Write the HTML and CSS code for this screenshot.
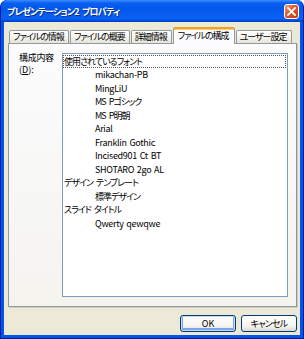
FILE: index.html
```html
<!DOCTYPE html>
<html lang="ja">
<head>
  <meta charset="UTF-8">
  <title>プレゼンテーション2 プロパティ</title>
  <link rel="stylesheet" href="styles.css">
</head>
<body>
  <div class="window">
    <div class="titlebar">
      <span class="title">プレゼンテーション2 プロパティ</span>
      <button class="closeBtn" aria-label="閉じる">
        <svg width="9" height="9" viewBox="0 0 9 9">
          <path d="M1 1 L8 8 M8 1 L1 8" stroke="#fff" stroke-width="1.8" stroke-linecap="square"/>
        </svg>
      </button>
    </div>

    <div class="dialog">
      <div class="tabs">
        <div class="tab">ファイルの情報</div>
        <div class="tab">ファイルの概要</div>
        <div class="tab">詳細情報</div>
        <div class="tab active">ファイルの構成</div>
        <div class="tab">ユーザー設定</div>
      </div>

      <div class="panel">
        <div class="fieldLabel">
          <div>構成内容</div>
          <div class="accel">(<u>D</u>):</div>
        </div>
        <ul class="listBox">
          <li class="focused">使用されているフォント</li>
          <li class="sub lat">mikachan-PB</li>
          <li class="sub lat">MingLiU</li>
          <li class="sub">MS Pゴシック</li>
          <li class="sub">MS P明朝</li>
          <li class="sub lat">Arial</li>
          <li class="sub lat">Franklin Gothic</li>
          <li class="sub lat">Incised901 Ct BT</li>
          <li class="sub lat">SHOTARO 2go AL</li>
          <li>デザイン テンプレート</li>
          <li class="sub">標準デザイン</li>
          <li>スライド タイトル</li>
          <li class="sub lat">Qwerty qewqwe</li>
        </ul>
      </div>

      <div class="buttons">
        <button class="btn default">OK</button>
        <button class="btn">キャンセル</button>
      </div>
    </div>
  </div>
</body>
</html>
```

FILE: styles.css
```css
* {
  margin: 0;
  padding: 0;
  box-sizing: border-box;
}

body {
  background-color: #fff;
  font-family: "Noto Sans CJK JP", "Noto Sans", sans-serif;
  font-feature-settings: "palt";
  font-size: 9px;
  letter-spacing: -1px;
  word-spacing: 2px;
  color: #000;
}

.window {
  width: 304px;
  height: 339px;
  display: flex;
  flex-direction: column;
  background-color: #0055e5;
  border: 1px solid #0019a8;
  border-top: none;
  border-radius: 7px 7px 0 0;
  padding: 0 3px 3px;
  overflow: hidden;
}

.titlebar {
  height: 22px;
  margin: 0 -3px;
  padding: 0 4px 0 6px;
  display: flex;
  align-items: center;
  justify-content: space-between;
  border-radius: 7px 7px 0 0;
  background: linear-gradient(#3b8dff 0, #0b60f2 3px, #0057ea 8px, #0a5ff0 16px, #0560f4 19px, #0046cf 21px, #003cc0 22px);
}

.title {
  color: #fff;
  font-size: 9px;
  font-weight: bold;
  letter-spacing: -0.8px;
  word-spacing: 2px;
  text-shadow: 1px 1px 0 #0a2c8c;
}

.closeBtn {
  width: 15px;
  height: 15px;
  display: flex;
  align-items: center;
  justify-content: center;
  border: 1px solid #fff;
  border-radius: 3px;
  background: linear-gradient(135deg, #f09a78 0%, #e2562c 45%, #c83b12 100%);
}

.dialog {
  flex: 1;
  display: flex;
  flex-direction: column;
  background-color: #ece9d8;
  padding: 5px 3px 3px 4px;
}

.tabs {
  display: flex;
  align-items: flex-end;
  height: 16px;
  padding-left: 1px;
  position: relative;
  z-index: 1;
}

.tab {
  height: 13px;
  padding: 0 4px 0 3px;
  line-height: 12px;
  white-space: nowrap;
  border: 1px solid #919b9c;
  border-bottom: none;
  border-radius: 2px 2px 0 0;
  background: linear-gradient(#fff, #f3f2ec 60%, #e4e2d8);
  margin-right: 1px;
}

.tab.active {
  height: 17px;
  margin-bottom: -1px;
  padding: 0 5px 0 4px;
  line-height: 14px;
  border-top: 2px solid #f0a030;
  background: #fcfcfe;
  box-shadow: inset 0 1px 0 #ffd26a;
}

.panel {
  height: 264px;
  display: grid;
  grid-template-columns: 43px 1fr;
  padding: 9px 8px 9px 10px;
  border: 1px solid #919b9c;
  border-right-color: #8a9294;
  background: linear-gradient(#fcfcfe, #f4f3ee);
  box-shadow: 1px 1px 0 #d0cdc0;
}

.fieldLabel {
  margin-top: -1px;
  line-height: 12px;
  letter-spacing: -0.3px;
}

.accel {
  letter-spacing: 0;
}

.listBox {
  list-style: none;
  background-color: #fff;
  border: 1px solid #7f9db9;
  padding-top: 1px;
  overflow: hidden;
}

.listBox li {
  height: 13.5px;
  line-height: 13px;
  padding-left: 1px;
  white-space: nowrap;
}

.listBox li.sub {
  padding-left: 32px;
}

.listBox li.lat {
  letter-spacing: -0.3px;
  word-spacing: 1px;
}

.listBox li.focused {
  height: 13px;
  margin-right: 1px;
  outline: 1px dotted #555;
  outline-offset: -1px;
}

.buttons {
  display: flex;
  justify-content: flex-end;
  gap: 5px;
  margin-top: 8px;
}

.btn {
  width: 56px;
  height: 17px;
  font-family: inherit;
  font-feature-settings: "palt";
  font-size: 9px;
  letter-spacing: -0.8px;
  color: #000;
  border: 1px solid #003c74;
  border-radius: 3px;
  background: linear-gradient(#fff, #f3f2ed 70%, #dcd7cb);
}

.btn.default {
  letter-spacing: 0;
  box-shadow: inset 0 0 0 1px #c6dcf8, inset 0 -1px 0 2px #7ea6e4;
}
```
